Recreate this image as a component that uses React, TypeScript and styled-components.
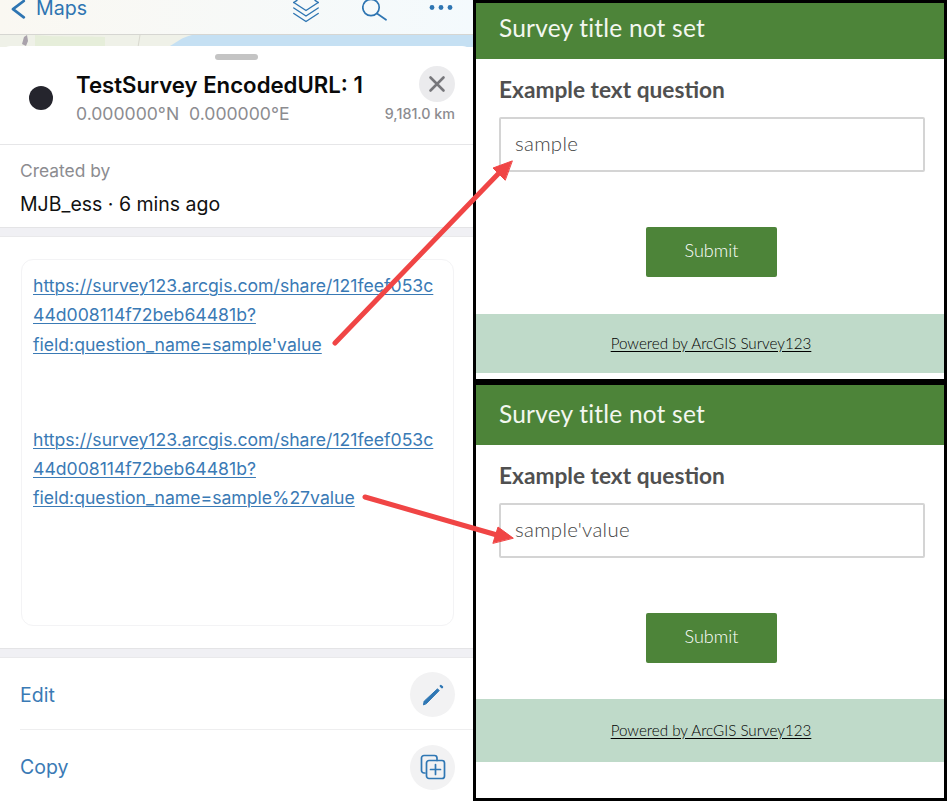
import React from "react";
import styled, { createGlobalStyle } from "styled-components";

const Global = createGlobalStyle`
  html, body { margin: 0; padding: 0; background: #000; }
  * { box-sizing: border-box; }
`;

const Page = styled.div`
  position: relative;
  width: 947px;
  height: 801px;
  display: flex;
  background: #000;
  overflow: hidden;
`;

const Phone = styled.div`
  width: 473px;
  height: 801px;
  flex: none;
  display: flex;
  flex-direction: column;
  background: #fff;
  overflow: hidden;
  font-family: Inter, "Liberation Sans", sans-serif;
`;

const NavBar = styled.div`
  height: 35px;
  flex: none;
  display: flex;
  align-items: flex-start;
  padding: 0 20px 0 11px;
  background: linear-gradient(90deg, #faf8f2, #f4fafd);
  border-bottom: 1px solid #d6d6d2;
  color: #2e75b2;
`;

const BackLink = styled.div`
  display: flex;
  align-items: flex-start;
  gap: 10px;
  font-size: 19.6px;
  line-height: 16px;
`;

const NavIcons = styled.div`
  margin-left: auto;
  display: flex;
  align-items: flex-start;
`;

const NavIconBox = styled.div<{ $left: number }>`
  margin-left: ${(p) => p.$left}px;
  display: flex;
`;

const MapStrip = styled.div`
  height: 12px;
  flex: none;
  display: flex;
  background: #eff1e8;
`;

const Sheet = styled.div`
  flex: 1;
  display: flex;
  flex-direction: column;
  background: #fff;
  border-radius: 11px 11px 0 0;
  min-height: 0;
  margin-top: -1px;
`;

const Grabber = styled.div`
  width: 43px;
  height: 6px;
  border-radius: 3px;
  background: #c4c4c4;
  margin: 8px auto 0;
  flex: none;
`;

const Header = styled.div`
  height: 85px;
  flex: none;
  display: flex;
  padding: 6px 18px 0 29px;
  border-bottom: 1px solid #e6e6e8;
`;

const Dot = styled.div`
  width: 24px;
  height: 24px;
  border-radius: 50%;
  background: #25252d;
  margin-top: 20px;
  flex: none;
`;

const HeaderText = styled.div`
  margin-left: 23px;
  flex: 1;
  min-width: 0;
`;

const Title = styled.div`
  font-size: 22.2px;
  font-weight: 600;
  color: #0a0a0a;
  line-height: 26px;
  margin-top: 6px;
  white-space: nowrap;
`;

const Coords = styled.div`
  font-size: 17.6px;
  color: #8c8c90;
  line-height: 20px;
  margin-top: 6px;
  white-space: pre;
`;

const HeaderSide = styled.div`
  display: flex;
  flex-direction: column;
  align-items: flex-end;
`;

const CloseButton = styled.div`
  width: 36px;
  height: 36px;
  border-radius: 50%;
  background: #ebebed;
  display: flex;
  align-items: center;
  justify-content: center;
`;

const Distance = styled.div`
  font-size: 14.3px;
  font-weight: 500;
  color: #8c8c90;
  margin-top: 4px;
  line-height: 16px;
  white-space: nowrap;
`;

const CreatedBlock = styled.div`
  height: 82px;
  flex: none;
  padding: 15px 20px 0;
`;

const CreatedLabel = styled.div`
  font-size: 17.4px;
  color: #8c8c90;
  line-height: 22px;
`;

const CreatedValue = styled.div`
  font-size: 19.5px;
  color: #111;
  line-height: 24px;
  margin-top: 10px;
  white-space: nowrap;
`;

const Band = styled.div`
  height: 10px;
  flex: none;
  background: #f0f0f4;
  border-top: 1px solid #e4e4e6;
  border-bottom: 1px solid #e9e9eb;
`;

const Content = styled.div`
  height: 411px;
  flex: none;
  padding: 22px 19px 22px 21px;
`;

const LinkCard = styled.div`
  height: 100%;
  border: 1px solid #f3f3f5;
  border-radius: 12px;
  padding: 11px 0 0 11px;
  display: flex;
  flex-direction: column;
  gap: 66px;
`;

const LinkText = styled.a`
  display: block;
  font-size: 17.62px;
  line-height: 29.3px;
  color: #3a7ab5;
  white-space: pre;
  text-decoration: underline;
  text-underline-offset: 2px;
  text-decoration-thickness: 1px;
`;

const ActionRow = styled.div<{ $last?: boolean }>`
  height: 72px;
  flex: none;
  margin-left: 20px;
  padding-right: 18px;
  display: flex;
  align-items: center;
  justify-content: space-between;
  border-bottom: ${(p) => (p.$last ? "none" : "1px solid #eeeeef")};
  padding-top: 2px;
`;

const ActionLabel = styled.div`
  font-size: 19.5px;
  color: #3a7ab5;
`;

const ActionIcon = styled.div`
  width: 45px;
  height: 45px;
  border-radius: 50%;
  background: #f2f2f3;
  display: flex;
  align-items: center;
  justify-content: center;
`;

const SurveyColumn = styled.div`
  flex: none;
  width: 468px;
  margin-left: 3px;
  padding-top: 3px;
  display: flex;
  flex-direction: column;
  gap: 6px;
  font-family: Lato, "Open Sans", sans-serif;
`;

const SurveyPanel = styled.div<{ $height: number }>`
  height: ${(p) => p.$height}px;
  flex: none;
  background: #fff;
`;

const SurveyHeader = styled.div<{ $height: number; $lift: number }>`
  height: ${(p) => p.$height}px;
  background: #4d8439;
  color: #f3f7f0;
  font-size: 24.5px;
  padding: 0 0 ${(p) => p.$lift}px 23px;
  display: flex;
  align-items: center;
  letter-spacing: 0.2px;
`;

const SurveyBody = styled.div`
  padding: 17px 19px 0 23px;
`;

const Question = styled.div`
  font-size: 22.7px;
  font-weight: 700;
  color: #505050;
  line-height: 28px;
  white-space: nowrap;
`;

const AnswerBox = styled.div`
  height: 55px;
  margin-top: 13px;
  border: 2px solid #d4d4d4;
  border-radius: 2px;
  padding: 0 0 4px 14px;
  display: flex;
  align-items: center;
  font-size: 20.4px;
  font-weight: 300;
  color: #444;
  letter-spacing: 0.3px;
`;

const SubmitButton = styled.div`
  width: 131px;
  height: 50px;
  margin: 55px 0 0 147px;
  background: #4d8439;
  border-radius: 2px;
  color: #fff;
  font-size: 18px;
  font-weight: 300;
  padding-bottom: 4px;
  display: flex;
  align-items: center;
  justify-content: center;
`;

const PoweredBand = styled.div<{ $top: number; $height: number }>`
  height: ${(p) => p.$height}px;
  margin-top: ${(p) => p.$top}px;
  background: #bfdac9;
  display: flex;
  align-items: center;
  justify-content: center;
  font-size: 15.2px;
  font-weight: 300;
  color: #000;
  padding: 0 0 2px 2px;
  text-decoration: underline;
  text-underline-offset: 2px;
`;

const ArrowLayer = styled.svg`
  position: absolute;
  left: 0;
  top: 0;
  width: 947px;
  height: 801px;
  pointer-events: none;
`;

const urlHead = "https://survey123.arcgis.com/share/121feef053c\n44d008114f72beb64481b?\n";

type SurveyProps = { answer: string; panel: number; head: number; lift: number; btop: number; bh: number };

const Survey = ({ answer, panel, head, lift, btop, bh }: SurveyProps) => (
  <SurveyPanel $height={panel}>
    <SurveyHeader $height={head} $lift={lift}>Survey title not set</SurveyHeader>
    <SurveyBody>
      <Question>Example text question</Question>
      <AnswerBox>{answer}</AnswerBox>
      <SubmitButton>Submit</SubmitButton>
    </SurveyBody>
    <PoweredBand $top={btop} $height={bh}>Powered by ArcGIS Survey123</PoweredBand>
  </SurveyPanel>
);

export default function App() {
  return (
    <Page>
      <Global />
      <Phone>
        <NavBar>
          <BackLink>
            <svg width="15" height="19" viewBox="0 0 15 19" fill="none" stroke="#2e75b2" strokeWidth="2.7" strokeLinecap="round" strokeLinejoin="round">
              <path d="M12.8 1 L2 9.2 L12.8 17.3" />
            </svg>
            Maps
          </BackLink>
          <NavIcons>
            <NavIconBox $left={0}>
              <svg width="26" height="24" viewBox="0 0 26 24" fill="none" stroke="#2e75b2" strokeWidth="1.4" strokeLinejoin="round" strokeLinecap="round">
                <path d="M0.8 2.5 L13 10.5 L25.2 2.5" />
                <path d="M0.8 8 L13 16 L25.2 8" />
                <path d="M0.8 13.5 L13 21.5 L25.2 13.5" />
                <path d="M0.8 2.5 L4 0.3 M25.2 2.5 L22 0.3" />
              </svg>
            </NavIconBox>
            <NavIconBox $left={43}>
              <svg width="25" height="21" viewBox="0 0 25 21" fill="none" stroke="#2e75b2" strokeWidth="1.7" strokeLinecap="round">
                <circle cx="9" cy="7.5" r="8.2" />
                <path d="M15 13.5 L24 19.8" />
              </svg>
            </NavIconBox>
            <NavIconBox $left={42}>
              <svg width="24" height="12" viewBox="0 0 24 12" fill="#2e75b2">
                <circle cx="3" cy="7.5" r="2.4" />
                <circle cx="12" cy="7.5" r="2.4" />
                <circle cx="21" cy="7.5" r="2.4" />
              </svg>
            </NavIconBox>
          </NavIcons>
        </NavBar>
        <MapStrip>
          <svg width="473" height="12" viewBox="0 0 473 12">
            <path d="M168 12 C176 8 182 2 192 0 L473 0 L473 12 Z" fill="#c5e0f3" />
            <path d="M35 0 C50 2 80 1 105 2 L105 12 L35 12 Z" fill="#e6eeda" />
            <path d="M22 9 L24 2 L27 0 L28 6 L26 11 Z" fill="#a9a2ab" />
            <path d="M140 0 L138 12" stroke="#d8d8d0" fill="none" />
          </svg>
        </MapStrip>
        <Sheet>
          <Grabber />
          <Header>
            <Dot />
            <HeaderText>
              <Title>TestSurvey EncodedURL: 1</Title>
              <Coords>{"0.000000°N  0.000000°E"}</Coords>
            </HeaderText>
            <HeaderSide>
              <CloseButton>
                <svg width="18" height="18" viewBox="0 0 18 18" stroke="#77777b" strokeWidth="2.6" strokeLinecap="round">
                  <path d="M2.5 2.5 L15.5 15.5 M15.5 2.5 L2.5 15.5" />
                </svg>
              </CloseButton>
              <Distance>9,181.0 km</Distance>
            </HeaderSide>
          </Header>
          <CreatedBlock>
            <CreatedLabel>Created by</CreatedLabel>
            <CreatedValue>MJB_ess · 6 mins ago</CreatedValue>
          </CreatedBlock>
          <Band />
          <Content>
            <LinkCard>
              <LinkText>{urlHead + "field:question_name=sample'value"}</LinkText>
              <LinkText>{urlHead + "field:question_name=sample%27value"}</LinkText>
            </LinkCard>
          </Content>
          <Band />
          <ActionRow>
            <ActionLabel>Edit</ActionLabel>
            <ActionIcon>
              <svg width="24" height="24" viewBox="0 0 24 24" fill="none" stroke="#2f77b4" strokeLinecap="round">
                <path d="M2.5 21.5 L3.2 18.2 L16.5 5.8 L18.2 7.6 L5.5 20.5 Z" fill="#2f77b4" strokeWidth="1" strokeLinejoin="round" />
                <path d="M19.8 3 L21 4.2" strokeWidth="2.4" />
              </svg>
            </ActionIcon>
          </ActionRow>
          <ActionRow $last>
            <ActionLabel>Copy</ActionLabel>
            <ActionIcon>
              <svg width="26" height="26" viewBox="0 0 26 26" fill="none" stroke="#2f77b4" strokeWidth="1.7" strokeLinecap="round" strokeLinejoin="round">
                <path d="M5 19 H4 A2.5 2.5 0 0 1 1.5 16.5 V4 A2.5 2.5 0 0 1 4 1.5 H14.5 A2.5 2.5 0 0 1 17 4 V6.5" />
                <rect x="6.5" y="6.5" width="18" height="18" rx="2.5" />
                <path d="M15.5 10.5 V20.5 M10.5 15.5 H20.5" />
              </svg>
            </ActionIcon>
          </ActionRow>
        </Sheet>
      </Phone>
      <SurveyColumn>
        <Survey answer="sample" panel={376} head={56} lift={8} btop={37} bh={59} />
        <Survey answer="sample'value" panel={413} head={60} lift={4} btop={36} bh={63} />
      </SurveyColumn>
      <ArrowLayer viewBox="0 0 947 801">
        <g fill="#f04545" stroke="#f04545" strokeLinecap="round" strokeLinejoin="round">
          <path d="M335 343 L499 173" strokeWidth="5" fill="none" />
          <path d="M512 161 L493 168 L505 180 Z" strokeWidth="1" />
          <path d="M365 497 L497 535" strokeWidth="5" fill="none" />
          <path d="M513 538 L498 527 L493 543 Z" strokeWidth="1" />
        </g>
      </ArrowLayer>
    </Page>
  );
}
